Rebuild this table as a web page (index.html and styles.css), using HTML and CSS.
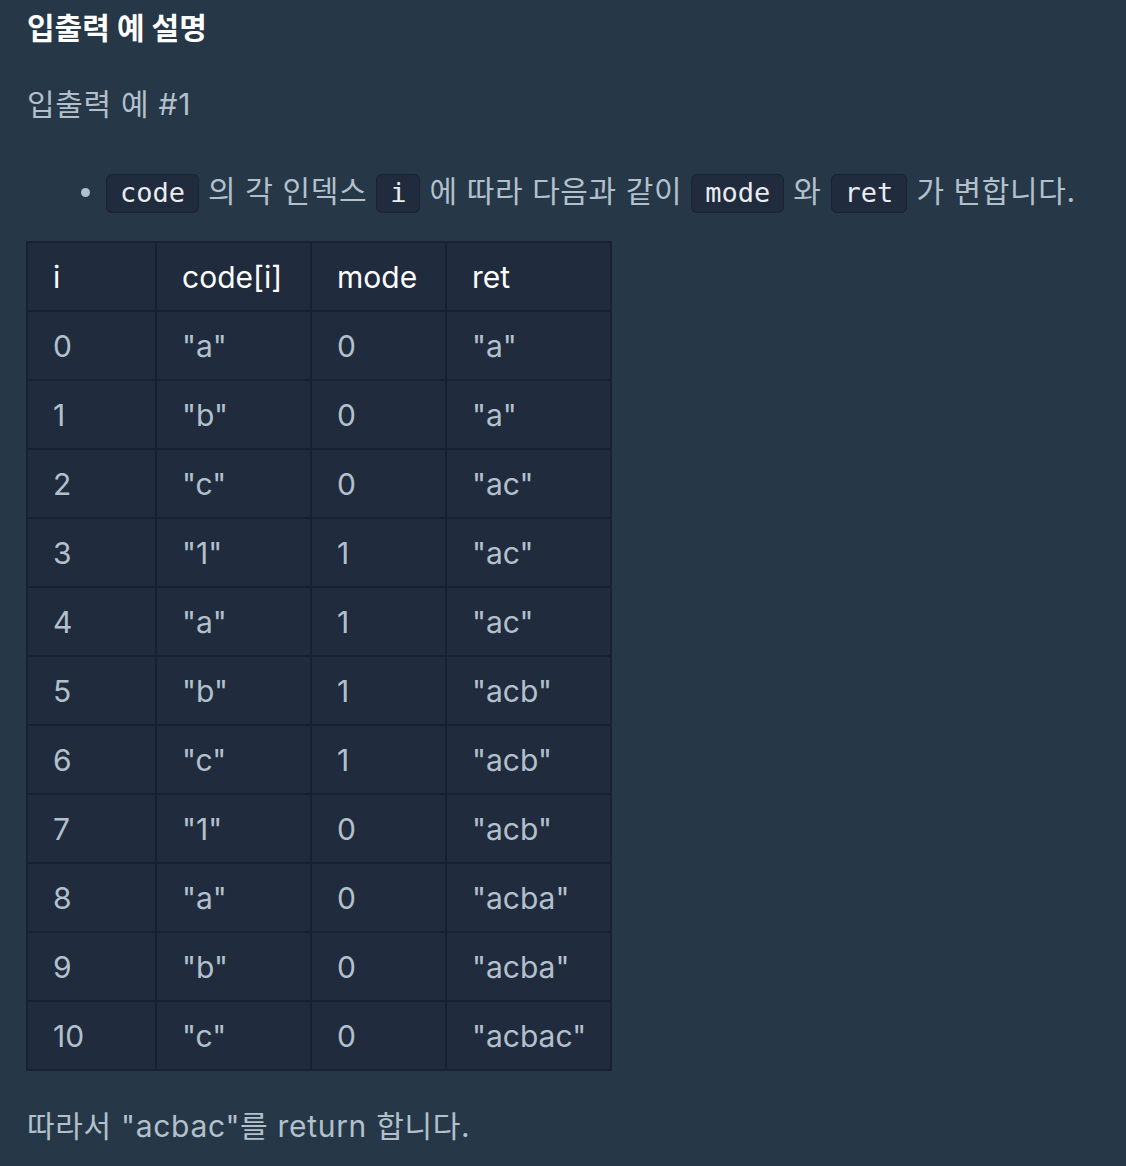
FILE: index.html
```html
<!DOCTYPE html>
<html lang="ko">
<head>
<meta charset="utf-8">
<link rel="stylesheet" href="styles.css">
</head>
<body>
<div class="doc">
  <h5 class="title">입출력 예 설명</h5>
  <p class="text sub">입출력 예 #1</p>
  <ul class="list">
    <li><code class="code">code</code> 의 각 인덱스 <code class="code">i</code> 에 따라 다음과 같이 <code class="code">mode</code> 와 <code class="code">ret</code> 가 변합니다.</li>
  </ul>
  <table class="tbl">
    <colgroup>
      <col class="c1"><col class="c2"><col class="c3"><col class="c4">
    </colgroup>
    <thead>
      <tr><th>i</th><th>code[i]</th><th>mode</th><th>ret</th></tr>
    </thead>
    <tbody>
      <tr><td>0</td><td>"a"</td><td>0</td><td>"a"</td></tr>
      <tr><td>1</td><td>"b"</td><td>0</td><td>"a"</td></tr>
      <tr><td>2</td><td>"c"</td><td>0</td><td>"ac"</td></tr>
      <tr><td>3</td><td>"1"</td><td>1</td><td>"ac"</td></tr>
      <tr><td>4</td><td>"a"</td><td>1</td><td>"ac"</td></tr>
      <tr><td>5</td><td>"b"</td><td>1</td><td>"acb"</td></tr>
      <tr><td>6</td><td>"c"</td><td>1</td><td>"acb"</td></tr>
      <tr><td>7</td><td>"1"</td><td>0</td><td>"acb"</td></tr>
      <tr><td>8</td><td>"a"</td><td>0</td><td>"acba"</td></tr>
      <tr><td>9</td><td>"b"</td><td>0</td><td>"acba"</td></tr>
      <tr><td>10</td><td>"c"</td><td>0</td><td>"acbac"</td></tr>
    </tbody>
  </table>
  <p class="text result">따라서 "acbac"를 return 합니다.</p>
</div>
</body>
</html>
```

FILE: styles.css
```css
html, body {
  margin: 0;
  padding: 0;
  background: #263747;
}
body {
  font-family: Inter, "Noto Sans CJK KR", sans-serif;
  color: #b2c0cc;
}
.doc {
  padding: 7px 27px 0 27px;
}
.title {
  margin: 0;
  font-size: 30px;
  line-height: 42px;
  font-weight: 700;
  color: #ffffff;
}
.text {
  font-size: 30px;
  line-height: 42px;
  margin: 0;
  letter-spacing: 0.7px;
}
.sub {
  margin-top: 34px;
}
.list {
  margin: 45px 0 0 0;
  padding-left: 79px;
  font-size: 30px;
  line-height: 42px;
  letter-spacing: 0.6px;
}
.list li {
  list-style: disc;
}
.list li::marker {
  font-size: 28px;
}
.code {
  font-family: "DejaVu Sans Mono", monospace;
  font-size: 27px;
  letter-spacing: 0;
  color: #e9ecf0;
  background: #202b3d;
  border: 1px solid #1a2331;
  border-radius: 6px;
  padding: 2px 13px 4px 13px;
}
.tbl {
  margin-top: 27px;
  margin-left: -1px;
  border-collapse: collapse;
  border: 2px solid #172130;
  background: #202b3d;
  font-size: 30px;
  table-layout: fixed;
  width: 584px;
}
.c1 { width: 129px; }
.c2 { width: 155px; }
.c3 { width: 135px; }
.c4 { width: 165px; }
.tbl th, .tbl td {
  border: 2px solid #172130;
  height: 67px;
  padding: 0 0 0 25px;
  text-align: left;
  vertical-align: middle;
  white-space: nowrap;
}
.tbl th {
  font-weight: 400;
  color: #ffffff;
}
.tbl td {
  color: #b2c0cc;
}
.result {
  margin-top: 34px;
}
```
